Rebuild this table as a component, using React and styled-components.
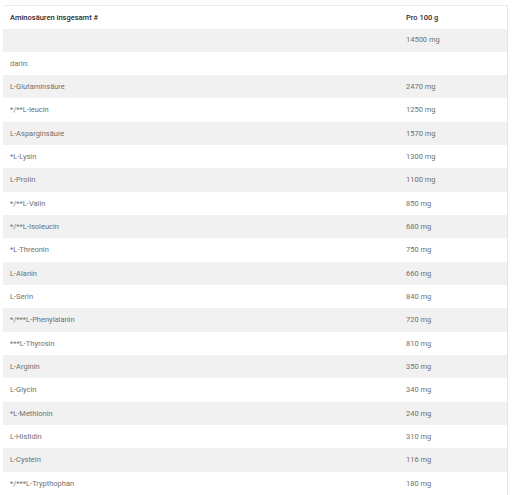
import styled, { createGlobalStyle } from 'styled-components';

const GlobalStyle = createGlobalStyle`
  body {
    margin: 0;
    background: #fff;
    font-family: Roboto, "Liberation Sans", sans-serif;
  }
`;

const rows = [
  ['', '14500 mg'],
  ['darin:', ''],
  ['L-Glutaminsäure', '2470 mg'],
  ['*/**L-leucin', '1250 mg'],
  ['L-Asparginsäure', '1570 mg'],
  ['*L-Lysin', '1300 mg'],
  ['L-Prolin', '1100 mg'],
  ['*/**L-Valin', '850 mg'],
  ['*/**L-Isoleucin', '680 mg'],
  ['*L-Threonin', '750 mg'],
  ['L-Alanin', '660 mg'],
  ['L-Serin', '840 mg'],
  ['*/***L-Phenylalanin', '720 mg'],
  ['***L-Thyrosin', '810 mg'],
  ['L-Arginin', '350 mg'],
  ['L-Glycin', '340 mg'],
  ['*L-Methionin', '240 mg'],
  ['L-Histidin', '310 mg'],
  ['L-Cystein', '116 mg'],
  ['*/***L-Trypthophan', '180 mg'],
];

const Wrap = styled.div`
  padding: 5px 4px 0 3px;
`;

const Table = styled.table`
  width: 100%;
  border-collapse: collapse;
  border-top: 1px solid #ececec;
  border-right: 1px solid #e6e6e6;
  table-layout: fixed;
`;

const Row = styled.tr`
  height: ${(p) => (p.$head ? '23px' : '23.33px')};
  background: ${(p) => (p.$striped ? '#f1f1f1' : '#fff')};
`;

const Cell = styled.td`
  padding: 0 7px;
  font-size: 7.5px;
  line-height: 1;
  color: ${(p) => (p.$head ? '#2b2b2b' : '#707070')};
  font-weight: ${(p) => (p.$head ? 500 : 400)};
  width: ${(p) => p.$w || 'auto'};
  vertical-align: middle;
  white-space: nowrap;
`;

export default function App() {
  return (
    <>
      <GlobalStyle />
      <Wrap>
        <Table>
          <tbody>
            <Row $head>
              <Cell $head $w="382px">Aminosäuren insgesamt #</Cell>
              <Cell $head>Pro 100 g</Cell>
            </Row>
            {rows.map(([name, value], i) => (
              <Row key={i} $striped={i % 2 === 0}>
                <Cell>{name}</Cell>
                <Cell>{value}</Cell>
              </Row>
            ))}
          </tbody>
        </Table>
      </Wrap>
    </>
  );
}
